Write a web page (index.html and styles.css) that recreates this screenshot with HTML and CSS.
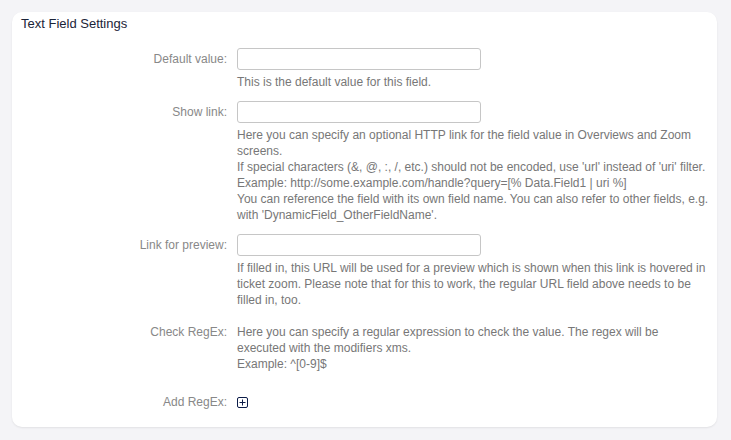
FILE: index.html
```html
<!DOCTYPE html>
<html lang="en">
<head>
<meta charset="utf-8">
<title>Text Field Settings</title>
<link rel="stylesheet" href="styles.css">
</head>
<body>
<div class="card">
  <h2 class="card-title">Text Field Settings</h2>
  <div class="form">
    <div class="row">
      <label class="label label-input" for="dv">Default value:</label>
      <div class="field">
        <input class="text-input" id="dv" type="text">
        <p class="desc">This is the default value for this field.</p>
      </div>
    </div>
    <div class="row">
      <label class="label label-input" for="sl">Show link:</label>
      <div class="field">
        <input class="text-input" id="sl" type="text">
        <p class="desc">Here you can specify an optional HTTP link for the field value in Overviews and Zoom screens.<br>If special characters (&amp;, @, :, /, etc.) should not be encoded, use 'url' instead of 'uri' filter.<br>Example: http://some.example.com/handle?query=[% Data.Field1 | uri %]<br>You can reference the field with its own field name. You can also refer to other fields, e.g. with 'DynamicField_OtherFieldName'.</p>
      </div>
    </div>
    <div class="row">
      <label class="label label-input" for="lp">Link for preview:</label>
      <div class="field">
        <input class="text-input" id="lp" type="text">
        <p class="desc">If filled in, this URL will be used for a preview which is shown when this link is hovered in ticket zoom. Please note that for this to work, the regular URL field above needs to be filled in, too.</p>
      </div>
    </div>
    <div class="row row-regex">
      <span class="label">Check RegEx:</span>
      <div class="field">
        <p class="desc desc-flush">Here you can specify a regular expression to check the value. The regex will be executed with the modifiers xms.<br>Example: ^[0-9]$</p>
      </div>
    </div>
    <div class="row row-add">
      <span class="label">Add RegEx:</span>
      <div class="field">
        <button class="add-btn" type="button" aria-label="Add RegEx">
          <svg width="11" height="11" viewBox="0 0 11 11" aria-hidden="true">
            <rect x="0.5" y="0.5" width="10" height="10" rx="1.5" fill="none" stroke="#0c1c48" stroke-width="1"/>
            <path d="M5.5 2.5v6M2.5 5.5h6" stroke="#0c1c48" stroke-width="1" fill="none"/>
          </svg>
        </button>
      </div>
    </div>
  </div>
</div>
</body>
</html>
```

FILE: styles.css
```css
html, body {
  margin: 0;
  padding: 0;
}

body {
  background: #f4f4f7;
  padding: 12px 14px 13px 12px;
  font-family: "Liberation Sans", Arial, sans-serif;
  font-size: 12px;
}

.card {
  background: #ffffff;
  border-radius: 10px;
  box-shadow: 0 1px 2px rgba(0, 0, 0, 0.08);
  padding: 4px 5px 17px 9px;
  min-height: 394px;
  box-sizing: border-box;
  height: 415px;
}

.card-title {
  margin: 0;
  font-size: 13px;
  line-height: 16px;
  font-weight: normal;
  color: #1b2438;
}

.form {
  margin-top: 16px;
  display: flex;
  flex-direction: column;
  gap: 11px;
}

.row {
  display: grid;
  grid-template-columns: 206px 472px;
  column-gap: 10px;
  align-items: start;
}

.label {
  text-align: right;
  color: #888888;
  line-height: 16px;
}

.label-input {
  line-height: 22px;
}

.field {
  min-width: 0;
}

.text-input {
  display: block;
  box-sizing: border-box;
  width: 244px;
  height: 22px;
  margin: 0;
  border: 1px solid #c6c6c6;
  border-radius: 3px;
  background: #ffffff;
  padding: 0 6px;
  font: inherit;
}

.desc {
  margin: 4px 0 0;
  color: #777777;
  line-height: 16px;
}

.desc-flush {
  margin-top: 0;
}

.row-regex {
  margin-top: 5px;
}

.row-add {
  margin-top: 11px;
}

.add-btn {
  display: flex;
  align-items: center;
  height: 16px;
  padding: 0;
  margin: 0;
  border: 0;
  background: none;
  cursor: pointer;
}
```
